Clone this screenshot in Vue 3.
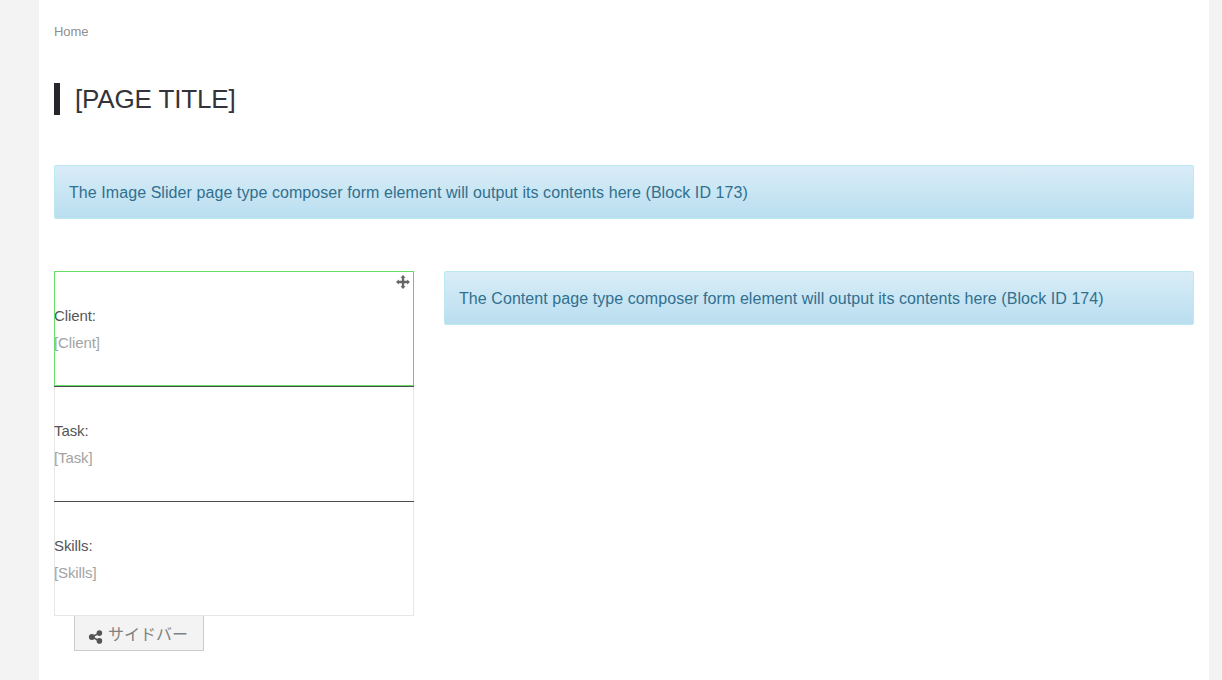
<template>
  <div class="page">
    <main class="container">
      <div class="crumb">Home</div>
      <h1 class="title">[PAGE TITLE]</h1>
      <div class="alert slider">The Image Slider page type composer form element will output its contents here (Block ID 173)</div>
      <div class="columns">
        <aside class="side">
          <div class="area">
            <div v-for="(b, i) in blocks" :key="b" class="block">
              <div class="label">{{ b }}:</div>
              <div class="value">[{{ b }}]</div>
              <template v-if="i === 0">
                <div class="hover"></div>
                <svg class="move" width="16" height="16" viewBox="0 0 16 16">
                  <path d="M8 1 10.6 3.8H9.2V6.8H12.2V5.4L15 8 12.2 10.6V9.2H9.2V12.2H10.6L8 15 5.4 12.2H6.8V9.2H3.8V10.6L1 8 3.8 5.4V6.8H6.8V3.8H5.4Z" fill="#666"/>
                </svg>
              </template>
            </div>
          </div>
          <button class="tab">
            <svg class="share" width="15" height="15" viewBox="0 0 15 15">
              <path d="M4 7.9 11 4.2M4 7.9 11 11.8" stroke="#555" stroke-width="1.6" fill="none"/>
              <circle cx="3.9" cy="7.9" r="3" fill="#555"/>
              <circle cx="11.4" cy="4.1" r="2.8" fill="#555"/>
              <circle cx="11.4" cy="11.9" r="2.8" fill="#555"/>
            </svg>
            <span>サイドバー</span>
          </button>
        </aside>
        <section class="content">
          <div class="alert">The Content page type composer form element will output its contents here (Block ID 174)</div>
        </section>
      </div>
    </main>
  </div>
</template>

<script setup>
const blocks = ['Client', 'Task', 'Skills']
</script>

<style>
html, body { margin: 0; background: #f3f3f3; }
</style>

<style scoped>
.page {
  height: 680px;
  overflow: hidden;
  background: #f3f3f3;
  font-family: "Liberation Sans", Arial, sans-serif;
  color: #555;
}
.container {
  width: 1140px;
  height: 680px;
  margin-left: 39px;
  padding: 0 15px;
  background: #fff;
}
.crumb {
  padding-top: 23px;
  height: 60px;
  box-sizing: border-box;
  font-size: 13px;
  line-height: 17px;
  letter-spacing: -0.03px;
  color: #8f8f8f;
}
.title {
  margin: 23px 0 50px;
  padding-left: 15px;
  border-left: 6px solid #26262c;
  height: 32px;
  font-size: 26px;
  font-weight: 400;
  line-height: 32px;
  letter-spacing: -0.15px;
  color: #33333a;
}
.alert {
  box-sizing: border-box;
  height: 54px;
  padding: 0 14px;
  border: 1px solid #bce8f1;
  border-radius: 2px;
  background: linear-gradient(#d9edf7, #b9def0);
  color: #31708f;
  font-size: 16px;
  line-height: 54px;
  letter-spacing: 0.07px;
}
.slider { margin-bottom: 52px; }
.columns {
  display: flex;
  gap: 30px;
  align-items: flex-start;
}
.side { width: 360px; flex: none; }
.area {
  outline: 1px solid #e6e6e6;
  outline-offset: -1px;
}
.block {
  position: relative;
  box-sizing: border-box;
  height: 115px;
  padding-top: 30px;
  border-top: 1px solid #4d4d4d;
  font-size: 15px;
  line-height: 27px;
  letter-spacing: -0.1px;
}
.block:first-child { border-top-color: transparent; }
.value { color: #a3a3a3; }
.hover {
  position: absolute;
  inset: -1px 0 0 0;
  border: 1px solid #66dd66;
  border-right-color: #66cc66;
}
.move { position: absolute; top: 2px; right: 3px; }
.tab {
  display: flex;
  align-items: center;
  box-sizing: border-box;
  width: 130px;
  height: 35px;
  margin-left: 20px;
  padding: 0 0 0 13px;
  border: 1px solid #ccc;
  border-top: 0;
  background: #f3f3f3;
  font-family: "Liberation Sans", "Noto Sans CJK JP", sans-serif;
  font-size: 16px;
  color: #808080;
}
.share { margin: 7px 5px 0 0; }
.tab span { margin-top: -1px; }
.content { flex: 1; }
</style>
